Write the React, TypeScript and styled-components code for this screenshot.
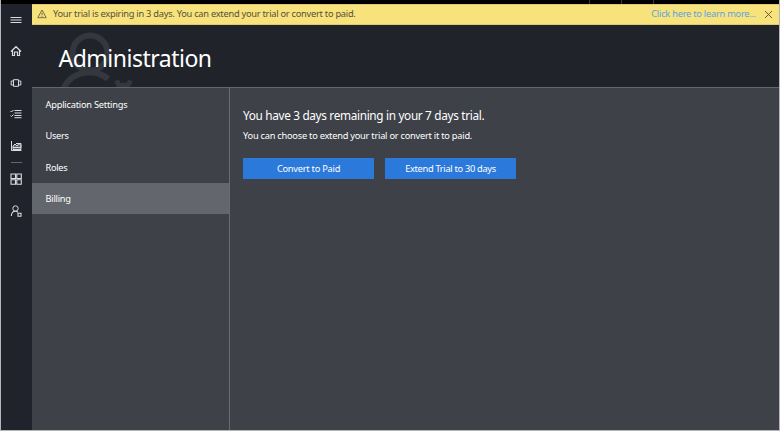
import React from "react";
import styled, { createGlobalStyle } from "styled-components";

const GlobalStyle = createGlobalStyle`
  *, *::before, *::after { box-sizing: border-box; }
  html, body { margin: 0; padding: 0; height: 100%; overflow: hidden; }
  body { font-family: "Segoe UI", "Noto Sans", "Open Sans", sans-serif; }
  button { font: inherit; }
`;

const Window = styled.div`
  display: flex;
  flex-direction: column;
  width: 780px;
  height: 431px;
  background: #20232a;
  border: 1px solid #b5b5b7;
  border-top: 0;
  color: #fff;
`;

const TitleStrip = styled.div`
  display: flex;
  justify-content: flex-end;
  flex: 0 0 4px;
  padding-right: 125px;
  gap: 31px;
  background: #000;
`;

const Tick = styled.span`
  width: 1px;
  height: 4px;
  background: #3c3c3c;
`;

const Shell = styled.div`
  display: flex;
  flex: 1;
  min-height: 0;
`;

const Rail = styled.nav`
  display: flex;
  flex-direction: column;
  align-items: center;
  flex: 0 0 31px;
  background: #20232b;
`;

const RailButton = styled.button<{ $height?: number }>`
  display: flex;
  align-items: center;
  justify-content: center;
  width: 31px;
  height: ${(p) => p.$height ?? 31.5}px;
  padding: 0 1px 0 0;
  border: 0;
  background: none;
  color: #dcdbe1;
`;

const RailDivider = styled.hr`
  width: 11px;
  height: 1px;
  margin: 0;
  border: 0;
  background: #64676d;
`;

const Main = styled.main`
  display: flex;
  flex-direction: column;
  flex: 1;
  min-width: 0;
`;

const Banner = styled.div`
  display: flex;
  align-items: center;
  flex: 0 0 21px;
  padding: 0 6px 1px 5px;
  background: #f7e27c;
  border-top: 1px solid #ddcb73;
  border-bottom: 1px solid #ddcb73;
  color: #55513a;
`;

const Text = styled.span<{ $size?: number; $track?: number }>`
  font-size: ${(p) => p.$size ?? 9.25}px;
  letter-spacing: ${(p) => p.$track ?? 0}px;
  line-height: 14px;
  white-space: nowrap;
`;

const BannerMessage = styled(Text)`
  flex: 1;
  margin-left: 6px;
`;

const BannerLink = styled(Text)`
  color: #5aa2e2;
  margin-right: 8px;
`;

const Header = styled.header`
  position: relative;
  flex: 0 0 62px;
  padding: 16px 0 0 26.5px;
  overflow: hidden;
  background: #20232a;
`;

const Watermark = styled.svg`
  position: absolute;
  left: 26px;
  top: 0;
`;

const Title = styled.h1`
  position: relative;
  margin: 0;
  font-size: 23px;
  font-weight: 400;
  line-height: 34px;
  letter-spacing: -0.5px;
`;

const Body = styled.div`
  display: flex;
  flex: 1;
  min-height: 0;
  border-top: 1px solid #63666a;
  background: #3e4148;
`;

const Menu = styled.div`
  flex: 0 0 198px;
  border-right: 1px solid #686b70;
`;

const MenuItem = styled.div<{ $active?: boolean }>`
  display: flex;
  align-items: center;
  height: 31.5px;
  padding: 2px 0 0 13.5px;
  background: ${(p) => (p.$active ? "#63666d" : "transparent")};
`;

const Content = styled.section`
  display: flex;
  flex-direction: column;
  padding: 19px 0 0 13px;
`;

const Heading = styled.h2`
  margin: 0;
  font-size: 11.8px;
  font-weight: 400;
  line-height: 17px;
  letter-spacing: -0.33px;
  white-space: nowrap;
`;

const Note = styled(Text)`
  margin-top: 5px;
`;

const Actions = styled.div`
  display: flex;
  gap: 11px;
  margin-top: 15px;
`;

const Action = styled.button`
  display: flex;
  align-items: center;
  justify-content: center;
  width: 131px;
  height: 21px;
  padding: 0;
  border: 0;
  background: #2b79db;
  color: #fff;
`;

const Icon = ({ size = 12, children }: { size?: number; children: React.ReactNode }) => (
  <svg width={size} height={size} viewBox="0 0 12 12" fill="none" stroke="currentColor" strokeWidth="1">
    {children}
  </svg>
);

export default function App() {
  return (
    <>
      <GlobalStyle />
      <Window>
        <TitleStrip><Tick /><Tick /><Tick /></TitleStrip>
        <Shell>
          <Rail>
            <RailButton>
              <Icon><path d="M.5 3.5h11M.5 6h11M.5 8.500h11" /></Icon>
            </RailButton>
            <RailButton>
              <Icon><path d="M1 6.5 6 1.7l5 4.8M2.5 5.5v5h2v-3.5h3v3.5h2v-5" strokeWidth="1.2" /></Icon>
            </RailButton>
            <RailButton>
              <Icon><path d="M3.5 2.7h5v6.6h-5zM3.5 4H1.2v4h2.3M8.5 4h2.3v4H8.5" /></Icon>
            </RailButton>
            <RailButton>
              <Icon><path d="M4.5 2.5h7M4.5 5h7M4.5 7.5h7M4.5 9.7h7M.5 3l1 1 2-2M.5 7.5l1 1 2-2" /></Icon>
            </RailButton>
            <RailButton $height={32}>
              <Icon>
                <path d="M1.5 1v9.5h10" />
                <path d="M3 8.5V6l2-2 2 2 2-2.5 2 2v4H3z" fill="currentColor" fillOpacity=".35" />
                <path d="M3 7.5h8M6 3.5h5v3" />
              </Icon>
            </RailButton>
            <RailDivider />
            <RailButton $height={32}>
              <Icon><path d="M1 1h4.500v4.500H1zM6.800 1h4.500v4.500H6.800zM1 6.800h4.500v4.500H1zM6.800 6.800h4.500v4.500H6.800z" strokeWidth="1.1" /></Icon>
            </RailButton>
            <RailButton>
              <Icon><circle cx="5.5" cy="3.5" r="2.7" /><path d="M1.3 11c.2-3 1.9-4.7 4.2-4.7 1 0 1.8.3 2.5 1M8 8.2h3v3H8z" strokeWidth="1.1" /></Icon>
            </RailButton>
          </Rail>
          <Main>
            <Banner>
              <svg width="10" height="10" viewBox="0 0 10 10" fill="none" stroke="currentColor" strokeWidth=".8">
                <path d="M5 1 9.2 8.7H.8zM5 3.7v2.7M5 7v.9" />
              </svg>
              <BannerMessage $track={-0.25}>Your trial is expiring in 3 days. You can extend your trial or convert to paid.</BannerMessage>
              <BannerLink $track={-0.24}>Click here to learn more...</BannerLink>
              <svg width="9" height="9" viewBox="0 0 9 9" stroke="currentColor" strokeWidth=".9">
                <path d="m1 1 7 7M8 1 1 8" />
              </svg>
            </Banner>
            <Header>
              <Watermark width="80" height="62" fill="none" stroke="#34373d" strokeWidth="6">
                <circle cx="32" cy="28" r="17.5" />
                <path d="M5 66C8 54 19 47.5 32 47.5c7 0 13 2 18 6.500" />
                <path d="m58.500 55.500 3 6M72.500 55.500l-3 6M61 61.500q4.500-3 9 0" strokeWidth="5" />
              </Watermark>
              <Title>Administration</Title>
            </Header>
            <Body>
              <Menu>
                <MenuItem><Text $track={-0.22}>Application Settings</Text></MenuItem>
                <MenuItem><Text $track={-0.3}>Users</Text></MenuItem>
                <MenuItem><Text $track={-0.3}>Roles</Text></MenuItem>
                <MenuItem $active><Text $track={-0.25}>Billing</Text></MenuItem>
              </Menu>
              <Content>
                <Heading>You have 3 days remaining in your 7 days trial.</Heading>
                <Note $track={-0.24}>You can choose to extend your trial or convert it to paid.</Note>
                <Actions>
                  <Action><Text $track={-0.24}>Convert to Paid</Text></Action>
                  <Action><Text $track={-0.3}>Extend Trial to 30 days</Text></Action>
                </Actions>
              </Content>
            </Body>
          </Main>
        </Shell>
      </Window>
    </>
  );
}
